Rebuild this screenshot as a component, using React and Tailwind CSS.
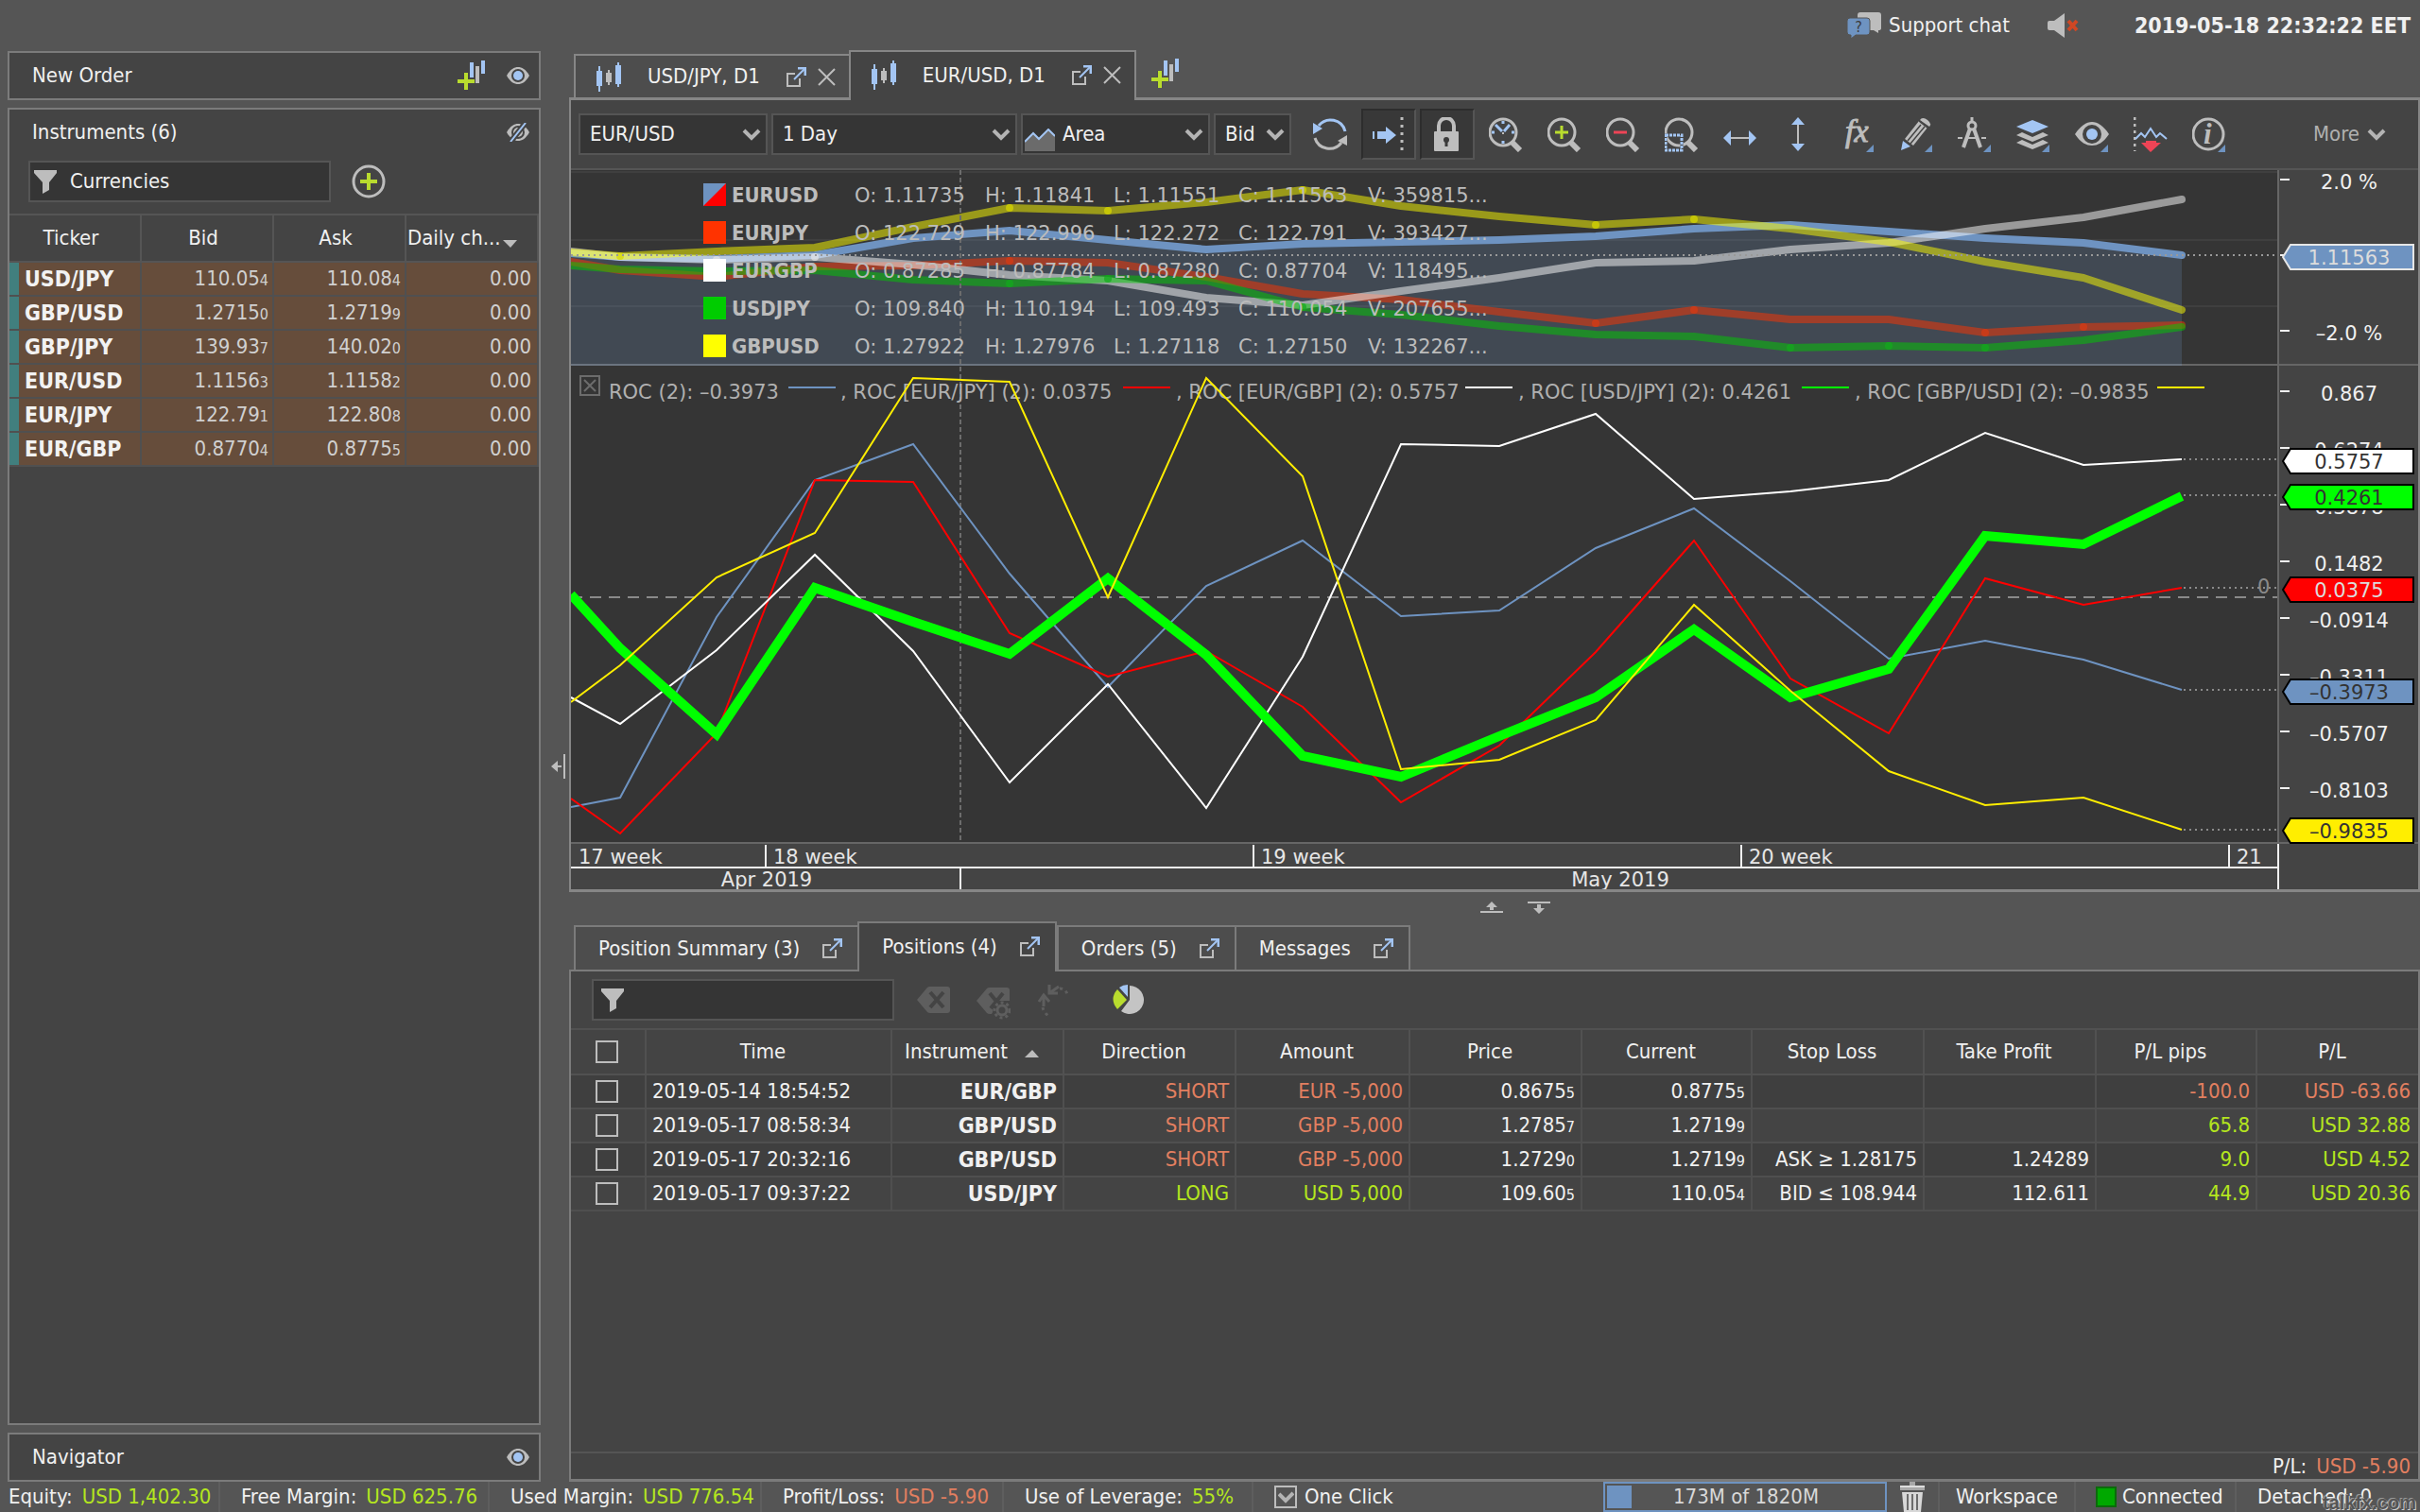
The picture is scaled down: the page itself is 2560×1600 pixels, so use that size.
import { useState } from 'react';
import clsx from 'clsx';

const XS = [604, 656, 758, 862, 966, 1068, 1172, 1276, 1378, 1482, 1586, 1688, 1792, 1894, 1998, 2100, 2204, 2308];

const PRICES = {
  eurusd: [268, 272, 274, 270, 252, 244, 254, 264, 258, 256, 254, 250, 242, 238, 245, 252, 257, 270],
  eurjpy: [277, 286, 293, 282, 281, 276, 278, 293, 311, 317, 330, 342, 328, 338, 338, 352, 346, 344],
  eurgbp: [266, 272, 275, 272, 280, 291, 297, 315, 323, 308, 294, 278, 276, 264, 257, 242, 230, 211],
  usdjpy: [281, 285, 287, 286, 296, 300, 295, 297, 325, 333, 345, 354, 356, 368, 366, 368, 360, 346],
  gbpusd: [267, 271, 266, 262, 240, 220, 223, 214, 201, 218, 229, 238, 232, 242, 256, 277, 294, 328],
};

const ROC = {
  eurusd: [854, 844, 653, 508, 470, 607, 727, 620, 572, 652, 646, 580, 538, 615, 697, 678, 698, 730],
  eurjpy: [845, 882, 776, 508, 510, 670, 716, 689, 748, 849, 789, 690, 572, 718, 776, 612, 640, 622],
  eurgbp: [738, 766, 688, 587, 689, 828, 724, 855, 695, 470, 472, 438, 528, 520, 508, 458, 492, 486],
  usdjpy: [629, 686, 777, 622, 658, 692, 612, 693, 800, 822, 779, 738, 666, 738, 708, 567, 576, 525],
  gbpusd: [743, 704, 611, 564, 400, 404, 632, 400, 504, 814, 804, 762, 640, 731, 816, 852, 844, 878],
};

const LEGEND = [
  { name: 'EURUSD', color: '#6e93c1', o: '1.11735', h: '1.11841', l: '1.11551', c: '1.11563', v: '359815...' },
  { name: 'EURJPY', color: '#ff3300', o: '122.729', h: '122.996', l: '122.272', c: '122.791', v: '393427...' },
  { name: 'EURGBP', color: '#ffffff', o: '0.87285', h: '0.87784', l: '0.87280', c: '0.87704', v: '118495...' },
  { name: 'USDJPY', color: '#00cc00', o: '109.840', h: '110.194', l: '109.493', c: '110.054', v: '207655...' },
  { name: 'GBPUSD', color: '#ffff00', o: '1.27922', h: '1.27976', l: '1.27118', c: '1.27150', v: '132267...' },
];

const ROC_LEGEND = [
  { x: 644, line: 834, text: 'ROC (2): –0.3973', color: '#6e93c1' },
  { x: 889, line: 1188, text: ', ROC [EUR/JPY] (2): 0.0375', color: '#ff0000' },
  { x: 1244, line: 1550, text: ', ROC [EUR/GBP] (2): 0.5757', color: '#ffffff' },
  { x: 1606, line: 1906, text: ', ROC [USD/JPY] (2): 0.4261', color: '#00ff00' },
  { x: 1962, line: 2282, text: ', ROC [GBP/USD] (2): –0.9835', color: '#ffee00' },
];

const MARKERS = [
  { color: '#d8d800', key: 'gbpusd', at: [1, 5, 6, 8, 11, 12] },
  { color: '#d93a12', key: 'eurjpy', at: [5, 11, 12, 15, 16] },
  { color: '#12aa1c', key: 'usdjpy', at: [5, 6, 8, 13, 14, 15] },
  { color: '#e4e4e4', key: 'eurgbp', at: [2, 3] },
];

const INSTRUMENTS = [
  ['USD/JPY', '110.05', '4', '110.08', '4'],
  ['GBP/USD', '1.2715', '0', '1.2719', '9'],
  ['GBP/JPY', '139.93', '7', '140.02', '0'],
  ['EUR/USD', '1.1156', '3', '1.1158', '2'],
  ['EUR/JPY', '122.79', '1', '122.80', '8'],
  ['EUR/GBP', '0.8770', '4', '0.8775', '5'],
];

const POSITIONS = [
  { time: '2019-05-14 18:54:52', name: 'EUR/GBP', side: 'SHORT', amount: 'EUR -5,000', price: ['0.8675', '5'], current: ['0.8775', '5'], sl: '', tp: '', pips: '-100.0', pl: 'USD -63.66', loss: true },
  { time: '2019-05-17 08:58:34', name: 'GBP/USD', side: 'SHORT', amount: 'GBP -5,000', price: ['1.2785', '7'], current: ['1.2719', '9'], sl: '', tp: '', pips: '65.8', pl: 'USD 32.88' },
  { time: '2019-05-17 20:32:16', name: 'GBP/USD', side: 'SHORT', amount: 'GBP -5,000', price: ['1.2729', '0'], current: ['1.2719', '9'], sl: 'ASK ≥ 1.28175', tp: '1.24289', pips: '9.0', pl: 'USD 4.52' },
  { time: '2019-05-17 09:37:22', name: 'USD/JPY', side: 'LONG', amount: 'USD 5,000', price: ['109.60', '5'], current: ['110.05', '4'], sl: 'BID ≤ 108.944', tp: '112.611', pips: '44.9', pl: 'USD 20.36' },
];

const toPoints = (ys) => ys.map((y, i) => `${XS[i]},${y}`).join(' ');

/* Icons */

const EyeIcon = ({ off }) => (
  <svg width="24" height="20" viewBox="0 0 24 20" aria-hidden="true">
    <path d="M0 10C4 3 8 1 12 1s8 2 12 9c-4 7-8 9-12 9S4 17 0 10Z" fill="#bdbdbd" />
    <circle cx="12" cy="10" r="7" fill="#444" />
    {off ? (
      <>
        <circle cx="12" cy="10" r="5" fill="#bdbdbd" />
        <circle cx="12" cy="10" r="2" fill="#444" />
        <path d="M4 20 20 0" stroke="#444" strokeWidth="6" />
        <path d="M4 20 20 0" stroke="#a3c5f3" strokeWidth="2" />
      </>
    ) : (
      <circle cx="12" cy="10" r="5" fill="#a3c5f3" />
    )}
  </svg>
);

const AddChartIcon = () => (
  <svg width="30" height="32" viewBox="0 0 30 32" aria-hidden="true">
    <path d="M15 2v16M27 0v14" stroke="#a3c5f3" strokeWidth="4" />
    <path d="M21 6v18" stroke="#bdbdbd" strokeWidth="4" />
    <path d="M9 13v18M0 22h18" stroke="#444" strokeWidth="6" opacity="0.4" />
    <path d="M9 13v18M0 22h18" stroke="#b9dc2e" strokeWidth="4" />
  </svg>
);

const CandlesIcon = () => (
  <svg width="26" height="31" viewBox="0 0 26 31" aria-hidden="true">
    <path d="M3 4v27M23 0v26" stroke="#a3c5f3" strokeWidth="2" />
    <path d="M0 9h6v16H0zM20 3h6v20h-6z" fill="#a3c5f3" />
    <path d="M13 8v16" stroke="#bdbdbd" strokeWidth="2" />
    <path d="M10 11h6v10h-6z" fill="#bdbdbd" />
  </svg>
);

const DetachIcon = () => (
  <svg width="21" height="21" viewBox="0 0 21 21" fill="none" aria-hidden="true">
    <path d="M9 7H1v13h13v-8" stroke="#bdbdbd" strokeWidth="2" />
    <path d="m8 13 11-11" stroke="#a3c5f3" strokeWidth="2" />
    <path d="M12 1h8v8" stroke="#a3c5f3" strokeWidth="3" />
  </svg>
);

const CrossIcon = () => (
  <svg width="19" height="19" viewBox="0 0 19 19" aria-hidden="true">
    <path d="m1 1 17 17M18 1 1 18" stroke="#bdbdbd" strokeWidth="2" />
  </svg>
);

const FunnelIcon = () => (
  <svg width="24" height="25" viewBox="0 0 24 25" className="shrink-0" aria-hidden="true">
    <path d="M0 0h24v3l-8 10v8l-7 4V13L0 3Z" fill="#bdbdbd" />
  </svg>
);

const Chevron = ({ className }) => (
  <svg width="20" height="13" viewBox="0 0 20 13" className={className} aria-hidden="true">
    <path d="m2 2 8 8 8-8" fill="none" stroke="#b4b4b4" strokeWidth="4" />
  </svg>
);

const Magnifier = ({ children }) => (
  <svg width="36" height="38" viewBox="0 0 36 38" aria-hidden="true">
    <circle cx="15" cy="17" r="14" fill="none" stroke="#bdbdbd" strokeWidth="3" />
    <path d="m24 27 9 9" stroke="#bdbdbd" strokeWidth="6" />
    {children}
  </svg>
);

const Corner = () => <path d="M35 30v8h-8Z" fill="#6e93c1" />;

const TOOLS = [
  {
    label: 'Refresh',
    icon: (
      <svg width="36" height="36" viewBox="0 0 36 36" fill="none" aria-hidden="true">
        <path d="M34 15A16 16 0 0 0 6 9" stroke="#a3c5f3" strokeWidth="3" />
        <path d="M0 6v12l10-6Z" fill="#a3c5f3" />
        <path d="M2 22a16 16 0 0 0 28 5" stroke="#bdbdbd" strokeWidth="3" />
        <path d="M36 30V19l-10 6Z" fill="#bdbdbd" />
      </svg>
    ),
  },
  {
    label: 'Auto shift',
    on: true,
    icon: (
      <svg width="34" height="36" viewBox="0 0 34 36" aria-hidden="true">
        <path d="M1 15v8" stroke="#a3c5f3" strokeWidth="2" />
        <path d="M5 15h9v-5l11 9-11 9v-5H5Z" fill="#a3c5f3" />
        <path d="M31 0v36" stroke="#bdbdbd" strokeWidth="3" strokeDasharray="3 5" />
      </svg>
    ),
  },
  {
    label: 'Lock',
    on: true,
    icon: (
      <svg width="28" height="36" viewBox="0 0 28 36" aria-hidden="true">
        <path d="M5 15V9a8 8 0 0 1 16 0v6" fill="none" stroke="#bdbdbd" strokeWidth="4" />
        <rect y="15" width="26" height="21" rx="1" fill="#bdbdbd" />
        <circle cx="13" cy="24" r="3" fill="#3a3a3a" />
        <path d="M13 24v7" stroke="#3a3a3a" strokeWidth="3" />
      </svg>
    ),
  },
  {
    label: 'Zoom to period',
    icon: (
      <Magnifier>
        <path d="M15 5v3M15 26v3M3 17h3M24 17h3M14 16l-7-7M16 16l6-7" stroke="#a3c5f3" strokeWidth="3" />
        <path d="M14 18h2" stroke="#bdbdbd" strokeWidth="2" />
      </Magnifier>
    ),
  },
  {
    label: 'Zoom in',
    icon: (
      <Magnifier>
        <path d="M15 10v14M8 17h14" stroke="#b9dc2e" strokeWidth="3" />
      </Magnifier>
    ),
  },
  {
    label: 'Zoom out',
    icon: (
      <Magnifier>
        <path d="M8 17h14" stroke="#ee4456" strokeWidth="3" />
      </Magnifier>
    ),
  },
  {
    label: 'Zoom to area',
    icon: (
      <Magnifier>
        <rect x="1" y="20" width="17" height="16" fill="none" stroke="#444" strokeWidth="3" />
        <rect x="1" y="20" width="17" height="16" fill="none" stroke="#a3c5f3" strokeWidth="3" strokeDasharray="3 1" />
      </Magnifier>
    ),
  },
  {
    label: 'Fit horizontally',
    icon: (
      <svg width="36" height="36" viewBox="0 0 36 36" aria-hidden="true">
        <path d="M6 22h24" stroke="#bdbdbd" strokeWidth="2" />
        <path d="M0 22l8-8v16ZM35 22l-8-8v16Z" fill="#a3c5f3" />
      </svg>
    ),
  },
  {
    label: 'Fit vertically',
    icon: (
      <svg width="16" height="36" viewBox="0 0 16 36" aria-hidden="true">
        <path d="M7 6v24" stroke="#bdbdbd" strokeWidth="2" />
        <path d="M7 0l7 8H0ZM7 36l7-8H0Z" fill="#a3c5f3" />
      </svg>
    ),
  },
  {
    label: 'Indicators',
    icon: (
      <svg width="36" height="38" viewBox="0 0 36 38" className="overflow-visible" aria-hidden="true">
        <text x="5" y="27" fontFamily="'Liberation Serif', serif" fontStyle="italic" fontSize="34" fill="#bdbdbd" stroke="#bdbdbd">
          fx
        </text>
        <Corner />
      </svg>
    ),
  },
  {
    label: 'Draw',
    icon: (
      <svg width="36" height="38" viewBox="0 0 36 38" aria-hidden="true">
        <path d="M6 24 21 5l9 7-15 19Z" fill="#bdbdbd" />
        <path d="M22 4q3-4 8 0t2 7Z" fill="#bdbdbd" />
        <path d="m21 5 10 8M9 26 23 9M12 29 27 11" stroke="#444" strokeWidth="1.5" />
        <path d="m4 26 8 6-10 4Z" fill="#a3c5f3" />
        <Corner />
      </svg>
    ),
  },
  {
    label: 'Shapes',
    icon: (
      <svg width="36" height="38" viewBox="0 0 36 38" fill="none" stroke="#bdbdbd" aria-hidden="true">
        <path d="M15 1v6" strokeWidth="3" />
        <circle cx="15" cy="10" r="4" strokeWidth="3" />
        <path d="M13 13 6 33M17 13l7 20" strokeWidth="4" />
        <path d="M0 23h5M9 23h12M25 23h5" strokeWidth="2" />
        <g stroke="none"><Corner /></g>
      </svg>
    ),
  },
  {
    label: 'Layers',
    icon: (
      <svg width="36" height="38" viewBox="0 0 36 38" aria-hidden="true">
        <path d="m0 11 17-7 17 7-17 7Z" fill="#a3c5f3" />
        <path d="m0 20 6-3 11 5 11-5 6 3-17 7Z" fill="#bdbdbd" />
        <path d="m0 28 6-3 11 5 11-5 6 3-17 7Z" fill="#bdbdbd" />
        <Corner />
      </svg>
    ),
  },
  {
    label: 'Visibility',
    icon: (
      <svg width="36" height="38" viewBox="0 0 36 38" aria-hidden="true">
        <path d="M0 19C6 10 12 6 18 6s12 4 18 13c-6 9-12 12-18 12S6 28 0 19Z" fill="#bdbdbd" />
        <circle cx="18" cy="19" r="10" fill="#444" />
        <circle cx="18" cy="19" r="6" fill="#a3c5f3" />
        <Corner />
      </svg>
    ),
  },
  {
    label: 'Positions on chart',
    icon: (
      <svg width="36" height="38" viewBox="0 0 36 38" aria-hidden="true">
        <path d="M1 1v36" stroke="#bdbdbd" strokeWidth="3" strokeDasharray="3 4" />
        <path d="m2 24 6-6 4 4 6-9 6 9 4-4 7 6" fill="none" stroke="#a3c5f3" strokeWidth="2" />
        <path d="M13 26h11v2h5L18 38 8 28h5Z" fill="#ee4456" />
      </svg>
    ),
  },
  {
    label: 'Information',
    icon: (
      <svg width="36" height="38" viewBox="0 0 36 38" aria-hidden="true">
        <circle cx="17" cy="19" r="16" fill="none" stroke="#bdbdbd" strokeWidth="3" />
        <text x="12" y="29" fontFamily="'Liberation Serif', serif" fontStyle="italic" fontWeight="bold" fontSize="31" fill="#bdbdbd">
          i
        </text>
        <Corner />
      </svg>
    ),
  },
];

/* Small pieces */

const Price = ({ value, pip }) => (
  <>
    {value}
    <span className="text-base">{pip}</span>
  </>
);

const PanelHeader = ({ title, children }) => (
  <div className="flex h-12 items-center justify-between pl-6 pr-[10px]">
    <h2>{title}</h2>
    <div className="flex items-center gap-[22px]">{children}</div>
  </div>
);

const IconButton = ({ label, children, className }) => (
  <button type="button" aria-label={label} className={clsx('flex shrink-0 items-center justify-center', className)}>
    {children}
  </button>
);

const Dropdown = ({ label, value, className, children }) => (
  <div className={clsx('relative h-11', className)}>
    {children}
    <select
      aria-label={label}
      defaultValue={value}
      className={clsx(
        'h-full w-full appearance-none border-2 border-[#555] bg-[#353535] outline-none',
        children ? 'pl-[42px]' : 'pl-[10px]'
      )}
    >
      <option>{value}</option>
    </select>
    <Chevron className="pointer-events-none absolute right-[7px] top-4" />
  </div>
);

const ChartTab = ({ title, active }) => (
  <div
    className={clsx(
      'flex items-center border-2 border-b-0 border-[#868686] pl-[22px] pr-[14px]',
      active ? 'relative -mb-[3px] h-[53px] bg-[#444] pb-[2px]' : '-mr-[2px] h-[46px] bg-[#4d4d4d]'
    )}
  >
    <CandlesIcon />
    <button type="button" className="px-7">{title}</button>
    <IconButton label={`Detach ${title}`} className="mr-3"><DetachIcon /></IconButton>
    <IconButton label={`Close ${title}`}><CrossIcon /></IconButton>
  </div>
);

const BottomTab = ({ title, active, onSelect }) => (
  <div
    className={clsx(
      'flex items-center gap-6 border-2 border-b-0 border-[#7b7b7b] pl-6 pr-4',
      active ? 'relative -mb-[2px] h-[53px] bg-[#444] pb-[2px]' : '-mr-[2px] h-[47px] bg-[#4d4d4d]'
    )}
  >
    <button type="button" onClick={onSelect}>{title}</button>
    <IconButton label={`Detach ${title}`}><DetachIcon /></IconButton>
  </div>
);

/* Left side */

const Instruments = () => (
  <section className="flex-1 border-2 border-[#7b7b7b] bg-[#444]">
    <PanelHeader title="Instruments (6)">
      <IconButton label="Hide instruments"><EyeIcon off /></IconButton>
    </PanelHeader>
    <div className="flex items-center gap-[22px] px-5 pb-3 pt-[6px]">
      <label className="flex h-11 w-80 items-center gap-[14px] border-2 border-[#555] bg-[#353535] pl-1">
        <FunnelIcon />
        <input aria-label="Instrument filter" defaultValue="Currencies" className="w-full bg-transparent outline-none" />
      </label>
      <IconButton label="Add instrument">
        <svg width="36" height="36" viewBox="0 0 36 36" aria-hidden="true">
          <circle cx="18" cy="18" r="16" fill="none" stroke="#bdbdbd" strokeWidth="3" />
          <path d="M18 9v18M9 18h18" stroke="#b9dc2e" strokeWidth="4" />
        </svg>
      </IconButton>
    </div>
    <table className="w-full table-fixed border-separate border-spacing-0 border-t-2 border-[#555]">
      <thead>
        <tr className="h-[50px]">
          <th className="border-b-2 border-r-2 border-[#555] pr-2 font-normal">Ticker</th>
          <th className="border-b-2 border-r-2 border-[#555] pr-2 font-normal">Bid</th>
          <th className="border-b-2 border-r-2 border-[#555] pr-2 font-normal">Ask</th>
          <th className="whitespace-nowrap border-b-2 border-r-2 border-[#555] text-left font-normal">
            <span className="flex items-center gap-[2px] pl-px">
              Daily ch...
              <svg width="15" height="8" viewBox="0 0 15 8" className="mt-3" aria-hidden="true">
                <path d="M0 0h15L8 8Z" fill="#bdbdbd" />
              </svg>
            </span>
          </th>
        </tr>
      </thead>
      <tbody>
        {INSTRUMENTS.map(([name, bid, bidPip, ask, askPip]) => (
          <tr key={name} className="h-9 bg-[#664d3b] text-right text-[#d0d0d0]">
            <td className="border-b-2 border-r-2 border-[#505050] p-0 text-left text-[23px] font-bold text-[#f2f2f2]">
              <span className="flex h-[34px] items-center border-l-[10px] border-[#417f7e] pl-[6px]">{name}</span>
            </td>
            <td className="border-b-2 border-r-2 border-[#505050] pr-1"><Price value={bid} pip={bidPip} /></td>
            <td className="border-b-2 border-r-2 border-[#505050] pr-1"><Price value={ask} pip={askPip} /></td>
            <td className="border-b-2 border-r-2 border-[#505050] pr-[6px]">0.00</td>
          </tr>
        ))}
      </tbody>
    </table>
  </section>
);

const Sidebar = () => (
  <aside className="flex w-[564px] shrink-0 flex-col gap-2 pt-px">
    <section className="border-2 border-[#7b7b7b] bg-[#444]">
      <PanelHeader title="New Order">
        <IconButton label="New order chart"><AddChartIcon /></IconButton>
        <IconButton label="Show new order"><EyeIcon /></IconButton>
      </PanelHeader>
    </section>
    <Instruments />
    <section className="border-2 border-[#7b7b7b] bg-[#444]">
      <PanelHeader title="Navigator">
        <IconButton label="Show navigator"><EyeIcon /></IconButton>
      </PanelHeader>
    </section>
  </aside>
);

/* Chart */

const Tag = ({ y, fill, stroke = '#000', color = '#333', text }) => (
  <g>
    <path
      d={`M2415 ${y}L2423 ${y - 13}H2553V${y + 13}H2423Z`}
      fill={fill}
      stroke={stroke}
      strokeWidth="2"
    />
    <text x="2485" y={y + 8} textAnchor="middle" fill={color}>{text}</text>
  </g>
);

const Chart = () => (
  <svg viewBox="604 180 1954 761" className="block h-auto w-full" fontFamily="'DejaVu Sans', sans-serif" fontSize="21">
    <rect x="604" y="180" width="1806" height="712" fill="#353535" />
    <rect x="2410" y="180" width="148" height="761" fill="#444" />

    {/* price pane */}
    <path d="M604 182H2410M604 254H2410M604 324H2410" stroke="#3f3f3f" strokeWidth="2" />
    <polygon points={`604,387 ${toPoints(PRICES.eurusd)} 2308,387`} fill="#6e93c1" opacity="0.22" />
    <path d="M604 386H2558" stroke="#666" strokeWidth="2" />
    <path d="M604 386H2308" stroke="#6b7480" strokeWidth="2" />
    <g fill="none" strokeWidth="8" strokeLinejoin="round" strokeLinecap="round">
      <polyline points={toPoints(PRICES.eurusd)} stroke="#6e93c1" />
      <polyline points={toPoints(PRICES.eurjpy)} stroke="#ff3300" opacity="0.5" />
      <polyline points={toPoints(PRICES.eurgbp)} stroke="#ffffff" opacity="0.5" />
      <polyline points={toPoints(PRICES.usdjpy)} stroke="#00cc00" opacity="0.5" />
      <polyline points={toPoints(PRICES.gbpusd)} stroke="#ffff00" opacity="0.5" />
    </g>
    {MARKERS.map((m) =>
      m.at.map((i) => (
        <circle key={`${m.key}${i}`} cx={XS[i]} cy={PRICES[m.key][i]} r="4" fill={m.color} opacity="0.7" />
      ))
    )}
    <path d="M604 270H2410" stroke="#999" strokeWidth="2" strokeDasharray="2 4" />
    <path d="M1016 180V890" stroke="#6c6c6c" strokeWidth="2" strokeDasharray="5 3" />

    <g fill="#bcbcbc">
      {LEGEND.map((row, i) => {
        const y = 194 + i * 40;
        return (
          <g key={row.name}>
            <rect x="744" y={y} width="24" height="24" fill={row.color} />
            {i === 0 && <path d={`M768 ${y}v24h-24Z`} fill="#ff0000" />}
            <text x="774" y={y + 20} fontFamily="'DejaVu Sans Condensed', 'DejaVu Sans', sans-serif" fontSize="22" fontWeight="bold">
              {row.name}
            </text>
            <text x="904" y={y + 20}>O: {row.o}</text>
            <text x="1042" y={y + 20}>H: {row.h}</text>
            <text x="1178" y={y + 20}>L: {row.l}</text>
            <text x="1310" y={y + 20}>C: {row.c}</text>
            <text x="1447" y={y + 20}>V: {row.v}</text>
          </g>
        );
      })}
    </g>

    {/* rate of change pane */}
    <path d="M604 632H2410" stroke="#8a8a8a" strokeWidth="2" strokeDasharray="12 8" />
    <path d="M614 398h20v20h-20ZM618 402l12 12M630 402l-12 12" fill="none" stroke="#6c6c6c" strokeWidth="2" />
    {ROC_LEGEND.map((item) => (
      <g key={item.text}>
        <text x={item.x} y="422" fill="#b0b0b0">{item.text}</text>
        <path d={`M${item.line} 410h50`} stroke={item.color} strokeWidth="2" />
      </g>
    ))}
    <g fill="none" strokeWidth="2">
      <polyline points={toPoints(ROC.eurusd)} stroke="#6e93c1" />
      <polyline points={toPoints(ROC.eurjpy)} stroke="#ff0000" />
      <polyline points={toPoints(ROC.eurgbp)} stroke="#ffffff" />
      <polyline points={toPoints(ROC.usdjpy)} stroke="#00ff00" strokeWidth="10" />
      <polyline points={toPoints(ROC.gbpusd)} stroke="#ffee00" />
    </g>
    <path d="M2310 486H2410M2310 524H2410M2310 622H2410M2310 730H2410M2310 878H2410" stroke="#8a8a8a" strokeWidth="2" strokeDasharray="2 4" />
    <text x="2388" y="628" fill="#8a8a8a">0</text>

    {/* value axis */}
    <path d="M2410 180V892M604 892H2558" stroke="#666" strokeWidth="2" />
    <g fill="#f0f0f0" textAnchor="middle">
      {[['2.0 %', 190], ['–2.0 %', 350], ['0.867', 414], ['0.6274', 474], ['0.3878', 534], ['0.1482', 594], ['–0.0914', 654], ['–0.3311', 714], ['–0.5707', 774], ['–0.8103', 834]].map(
        ([label, y]) => (
          <g key={label}>
            <path d={`M2412 ${y}h10`} stroke="#f0f0f0" strokeWidth="2" />
            <text x="2485" y={y + 10}>{label}</text>
          </g>
        )
      )}
    </g>
    <path d="M2412 270h4" stroke="#f0f0f0" strokeWidth="2" />
    <Tag y={272} fill="#6e93c1" stroke="#e6e6e6" color="#dcdcdc" text="1.11563" />
    <Tag y={488} fill="#ffffff" text="0.5757" />
    <Tag y={526} fill="#00ff00" text="0.4261" />
    <Tag y={624} fill="#ff0000" color="#dcdcdc" text="0.0375" />
    <Tag y={732} fill="#6e93c1" text="–0.3973" />
    <Tag y={879} fill="#ffee00" text="–0.9835" />

    {/* time axis */}
    <rect x="604" y="893" width="1806" height="48" fill="#444" />
    <path d="M604 918H2410M810 894V917M1326 894V917M1842 894V917M2358 894V917M1016 918V941M2410 893V941" stroke="#f0f0f0" strokeWidth="2" />
    <g fill="#e6e6e6">
      <text x="612" y="914">17 week</text>
      <text x="818" y="914">18 week</text>
      <text x="1334" y="914">19 week</text>
      <text x="1850" y="914">20 week</text>
      <text x="2366" y="914">21</text>
      <text x="811" y="938" textAnchor="middle">Apr 2019</text>
      <text x="1714" y="938" textAnchor="middle">May 2019</text>
    </g>
  </svg>
);

const ChartPanel = () => (
  <section className="border-x-2 border-y-[3px] border-[#868686] bg-[#444]">
    <div className="flex h-[74px] items-center gap-1 border-b-2 border-[#555] pl-2 pr-[34px]">
      <Dropdown label="Instrument" value="EUR/USD" className="w-[200px]" />
      <Dropdown label="Period" value="1 Day" className="w-[260px]" />
      <Dropdown label="Chart type" value="Area" className="w-[200px]">
        <svg width="32" height="24" viewBox="0 0 32 24" className="pointer-events-none absolute left-1 top-4" aria-hidden="true">
          <path d="M0 14 9 5l6 6L25 1l7 7v16H0Z" fill="#6b6b6b" />
          <path d="M0 14 9 5l6 6L25 1l7 7" fill="none" stroke="#a3c5f3" strokeWidth="2" />
        </svg>
      </Dropdown>
      <Dropdown label="Price side" value="Bid" className="w-[82px]" />
      <div className="ml-2 flex gap-1">
        {TOOLS.map((tool) => (
          <IconButton
            key={tool.label}
            label={tool.label}
            className={clsx('h-[54px] w-[58px]', tool.on && 'border-2 border-b-[#555] border-l-[#2d2d2d] border-r-[#555] border-t-[#2d2d2d] bg-[#383838]')}
          >
            {tool.icon}
          </IconButton>
        ))}
      </div>
      <button type="button" className="ml-auto flex items-center gap-2 text-[#b0b0b0]">
        More
        <Chevron />
      </button>
    </div>
    <Chart />
  </section>
);

/* Positions */

const Check = ({ label }) => (
  <input
    type="checkbox"
    aria-label={label}
    className="block h-6 w-6 appearance-none border-2 border-[#bdbdbd]"
  />
);

const Th = ({ className, children }) => (
  <th className={clsx('border-b-2 border-r-2 border-[#515151] pr-3 font-normal last:border-r-0', className)}>{children}</th>
);

const Td = ({ left, className, children }) => (
  <td
    className={clsx(
      'whitespace-nowrap border-b-2 border-r-2 border-[#4f4f4f] py-0 pr-[6px] last:border-r-0 last:pr-2',
      left ? 'text-left' : 'text-right',
      className
    )}
  >
    {children}
  </td>
);

const PositionsTable = () => (
  <table className="w-full table-fixed border-separate border-spacing-0 border-t-2 border-[#515151]">
    <colgroup>
      <col className="w-[80px]" />
      <col className="w-[260px]" />
      <col className="w-[182px]" />
      <col className="w-[182px]" />
      <col className="w-[184px]" />
      <col className="w-[182px]" />
      <col className="w-[180px]" />
      <col className="w-[182px]" />
      <col className="w-[182px]" />
      <col className="w-[170px]" />
      <col />
    </colgroup>
    <thead>
      <tr className="h-12">
        <Th className="pl-[26px]"><Check label="Select all positions" /></Th>
        <Th>Time</Th>
        <Th>
          <span className="flex items-center justify-center gap-[18px]">
            Instrument
            <svg width="15" height="8" viewBox="0 0 15 8" className="mt-1" aria-hidden="true">
              <path d="M0 8h15L8 0Z" fill="#bdbdbd" />
            </svg>
          </span>
        </Th>
        <Th>Direction</Th>
        <Th>Amount</Th>
        <Th>Price</Th>
        <Th>Current</Th>
        <Th>Stop Loss</Th>
        <Th>Take Profit</Th>
        <Th>P/L pips</Th>
        <Th>P/L</Th>
      </tr>
    </thead>
    <tbody>
      {POSITIONS.map((row) => {
        const sideColor = row.side === 'SHORT' ? 'text-[#e27f60]' : 'text-[#b4e61e]';
        const plColor = row.loss ? 'text-[#e27f60]' : 'text-[#b4e61e]';
        return (
          <tr key={row.time} className="h-9 odd:bg-[#3f3f3f]">
            <Td left className="pl-[26px]"><Check label={`Select ${row.name} ${row.time}`} /></Td>
            <Td left className="pl-[6px]">{row.time}</Td>
            <Td className="text-[23px] font-bold">{row.name}</Td>
            <Td className={sideColor}>{row.side}</Td>
            <Td className={sideColor}>{row.amount}</Td>
            <Td><Price value={row.price[0]} pip={row.price[1]} /></Td>
            <Td><Price value={row.current[0]} pip={row.current[1]} /></Td>
            <Td>{row.sl}</Td>
            <Td>{row.tp}</Td>
            <Td className={plColor}>{row.pips}</Td>
            <Td className={plColor}>{row.pl}</Td>
          </tr>
        );
      })}
    </tbody>
  </table>
);

const PositionsPanel = () => (
  <section className="flex flex-1 flex-col border-2 border-b-[3px] border-[#7b7b7b] bg-[#444]">
    <div className="flex items-center px-[22px] py-2">
      <label className="flex h-11 w-80 items-center gap-3 border-2 border-[#555] bg-[#353535] pl-2">
        <FunnelIcon />
        <input aria-label="Filter positions" className="w-full bg-transparent outline-none" />
      </label>
      <IconButton label="Close position" className="ml-6">
        <svg width="35" height="28" viewBox="0 0 35 28" aria-hidden="true">
          <path d="M0 14 11 1q1-1 3-1h18q3 0 3 3v22q0 3-3 3H14q-2 0-3-1Z" fill="#5e5e5e" />
          <path d="m14 6 14 16M28 6 14 22" stroke="#444" strokeWidth="4" />
        </svg>
      </IconButton>
      <IconButton label="Conditional close" className="ml-7 mt-2">
        <svg width="36" height="34" viewBox="0 0 36 34" aria-hidden="true">
          <path d="M0 14 11 1q1-1 3-1h18q3 0 3 3v11H24l-8 14h-2q-2 0-3-1Z" fill="#5e5e5e" />
          <path d="m14 6 9 11M28 6 15 22" stroke="#444" strokeWidth="4" />
          <circle cx="27" cy="24" r="10" fill="#444" />
          <circle cx="27" cy="24" r="5" fill="none" stroke="#5e5e5e" strokeWidth="3" />
          <circle cx="27" cy="24" r="8" fill="none" stroke="#5e5e5e" strokeWidth="3" strokeDasharray="3 3" />
        </svg>
      </IconButton>
      <IconButton label="Reverse position" className="ml-7">
        <svg width="34" height="34" viewBox="0 0 34 34" fill="none" stroke="#5e5e5e" aria-hidden="true">
          <path d="M7 24V13M2 19l5-7 6 7" strokeWidth="3" />
          <path d="M23 3 13 10M13 1v9h9" strokeWidth="3" />
          <path d="M24 5q6 0 8 6M6 25q1 5 6 9" strokeWidth="3" strokeDasharray="3 4" />
        </svg>
      </IconButton>
      <IconButton label="Exposure" className="ml-[46px]">
        <svg width="33" height="32" viewBox="0 0 33 32" aria-hidden="true">
          <path d="M18 1A15 15 0 1 1 9 28L18 16Z" fill="#c4c4c4" />
          <path d="M15 16 5 26Q-4 15 5 5Z" fill="#b9dc2e" />
          <path d="M16 13 7 3q4-3 9-3Z" fill="#a3c5f3" />
        </svg>
      </IconButton>
    </div>
    <PositionsTable />
    <div className="mt-auto flex h-[29px] items-center justify-end gap-[10px] border-t-2 border-[#555] pr-2">
      <span>P/L:</span>
      <span className="text-[#e27f60]">USD -5.90</span>
    </div>
  </section>
);

/* Status bar */

const Stat = ({ label, value, loss, className }) => (
  <div className={clsx('flex items-center gap-[10px] border-r-2 border-[#5e5e5e]', className)}>
    <span>{label}</span>
    <span className={loss ? 'text-[#e27f60]' : 'text-[#b4e61e]'}>{value}</span>
  </div>
);

const StatusBar = () => (
  <footer className="relative flex h-8 items-stretch whitespace-nowrap">
    <Stat label="Equity:" value="USD 1,402.30" className="w-[233px] pl-[9px]" />
    <Stat label="Free Margin:" value="USD 625.76" className="w-[285px] pl-[22px]" />
    <Stat label="Used Margin:" value="USD 776.54" className="w-[288px] pl-[22px]" />
    <Stat label="Profit/Loss:" value="USD -5.90" loss className="w-[256px] pl-[22px]" />
    <Stat label="Use of Leverage:" value="55%" className="w-[264px] pl-[22px]" />
    <label className="flex items-center gap-2 pl-[22px]">
      <span className="relative block">
        <input type="checkbox" defaultChecked className="block h-6 w-6 appearance-none border-2 border-[#bdbdbd]" />
        <svg width="17" height="13" viewBox="0 0 17 13" className="pointer-events-none absolute left-1 top-[6px]" aria-hidden="true">
          <path d="m1 3 7 7 8-8" fill="none" stroke="#b4b4b4" strokeWidth="4" />
        </svg>
      </span>
      One Click
    </label>
    <div className="ml-auto flex w-[300px] items-center border-2 border-[#6e93c1] p-[2px]">
      <span className="h-6 w-[26px] bg-[#6e93c1]" />
      <span className="flex-1 pr-6 text-center text-[#d8d8d8]">173M of 1820M</span>
    </div>
    <IconButton label="Collect garbage" className="w-[56px] border-r-2 border-[#5e5e5e]">
      <svg width="28" height="32" viewBox="0 0 28 32" aria-hidden="true">
        <path d="M11 0h6v4h10v5H1V4h10Z" fill="#a8a8a8" />
        <path d="M1 5h26" stroke="#ddd" strokeWidth="2" />
        <path d="M3 11h22l-2 21H5Z" fill="#d8d8d8" />
        <path d="M9 13v17M14 13v17M19 13v17" stroke="#6c6c6c" strokeWidth="2" />
      </svg>
    </IconButton>
    <button type="button" className="w-[144px] border-r-2 border-[#5e5e5e]">Workspace</button>
    <div className="flex w-[170px] items-center gap-[6px] border-r-2 border-[#5e5e5e] pl-[21px]">
      <span className="h-[22px] w-[22px] border-2 border-[#0b6b0b] bg-[#00a800]" />
      Connected
    </div>
    <div className="flex w-[194px] items-center pl-[22px]">Detached: 0</div>
    <span className="absolute -bottom-1 right-1 font-['Liberation_Sans',sans-serif] text-[20px] font-bold text-[#555] [text-shadow:1px_1px_0_#ccc,-1px_-1px_0_#999]">
      talkfx.com
    </span>
  </footer>
);

const App = () => {
  const [tab, setTab] = useState('Positions (4)');
  const tabs = ['Position Summary (3)', 'Positions (4)', 'Orders (5)', 'Messages'];

  return (
    <div className="flex min-h-screen flex-col bg-[#555] font-['DejaVu_Sans_Condensed','DejaVu_Sans',sans-serif] text-[22px] leading-7 text-[#f0f0f0]">
      <header className="flex h-[53px] items-center justify-end pr-[10px]">
        <button type="button" className="flex items-center gap-2">
          <svg width="36" height="28" viewBox="0 0 36 28" aria-hidden="true">
            <path d="M14 0h19q3 0 3 3v14q0 2-3 2v3l-5-3H14q-3 0-3-2V3q0-3 3-3Z" fill="#bdbdbd" />
            <path d="M3 6h18q3 0 3 3v12q0 3-3 3H9l-5 4v-4H3q-3 0-3-3V9q0-3 3-3Z" fill="#6e93c1" stroke="#555" />
            <text x="12" y="21" textAnchor="middle" fontSize="16" fill="#3c3c3c">?</text>
          </svg>
          Support chat
        </button>
        <IconButton label="Mute" className="ml-10">
          <svg width="34" height="26" viewBox="0 0 34 26" aria-hidden="true">
            <path d="M2 8h5L18 0v26L7 18H2q-2 0-2-2v-6q0-2 2-2Z" fill="#bdbdbd" />
            <path d="m22 8 9 10M31 8l-9 10" stroke="#cf4724" strokeWidth="4" />
          </svg>
        </IconButton>
        <time className="ml-[58px] text-[23px] font-bold">2019-05-18 22:32:22 EET</time>
      </header>

      <div className="flex flex-1 pl-2">
        <Sidebar />
        <div className="flex w-[30px] shrink-0 items-center justify-center pl-2">
          <IconButton label="Collapse sidebar">
            <svg width="16" height="26" viewBox="0 0 16 26" aria-hidden="true">
              <path d="M0 13 7 7v12ZM7 12h4v2H7Z" fill="#bdbdbd" />
              <path d="M14 0v26" stroke="#bdbdbd" strokeWidth="2" />
            </svg>
          </IconButton>
        </div>

        <main className="flex min-w-0 flex-1 flex-col">
          <div className="flex h-[50px] items-end pl-[5px]">
            <ChartTab title="USD/JPY, D1" />
            <ChartTab title="EUR/USD, D1" active />
            <IconButton label="New chart" className="mb-[9px] ml-4"><AddChartIcon /></IconButton>
          </div>
          <ChartPanel />

          <div className="flex h-[31px] items-center justify-center gap-[26px] pl-11">
            <IconButton label="Expand charts">
              <svg width="24" height="14" viewBox="0 0 24 14" aria-hidden="true">
                <path d="M0 12h24" stroke="#bdbdbd" strokeWidth="2" />
                <path d="m12 1 6 6h-4v3h-4V7H6Z" fill="#bdbdbd" />
              </svg>
            </IconButton>
            <IconButton label="Collapse charts">
              <svg width="24" height="14" viewBox="0 0 24 14" aria-hidden="true">
                <path d="M0 2h24" stroke="#bdbdbd" strokeWidth="2" />
                <path d="m12 14 6-6h-4V4h-4v4H6Z" fill="#bdbdbd" />
              </svg>
            </IconButton>
          </div>

          <div className="flex h-[51px] items-end pl-[5px]">
            {tabs.map((name) => (
              <BottomTab key={name} title={name} active={tab === name} onSelect={() => setTab(name)} />
            ))}
          </div>
          <PositionsPanel />
        </main>
      </div>

      <StatusBar />
    </div>
  );
};

export default App;
